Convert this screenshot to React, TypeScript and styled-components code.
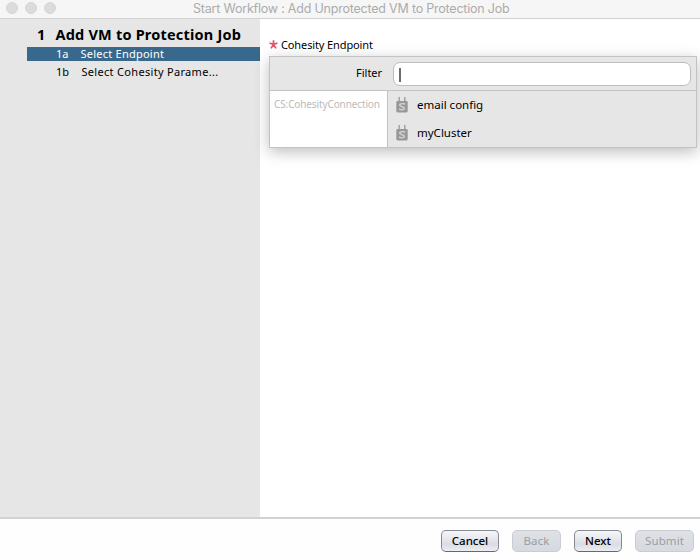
import React from 'react';
import styled, { createGlobalStyle } from 'styled-components';

const GlobalStyle = createGlobalStyle`
  *, *::before, *::after { box-sizing: border-box; }
  html, body { margin: 0; padding: 0; overflow: hidden; background: #fff; }
`;

const Window = styled.div`
  width: 700px;
  height: 560px;
  display: flex;
  flex-direction: column;
  overflow: hidden;
  background: #fff;
  color: #000;
  font-family: 'Noto Sans', 'Open Sans', sans-serif;
  font-size: 11px;
  white-space: nowrap;
`;

const TitleBar = styled.header`
  height: 19px;
  flex: none;
  display: grid;
  grid-template-columns: 193px 1fr;
  background: #f6f6f6;
  border-bottom: 1px solid #d3d3d3;
`;

const Lights = styled.div`
  display: flex;
  gap: 7px;
  padding: 2px 0 0 6px;
`;

const Light = styled.span`
  width: 12px;
  height: 12px;
  border-radius: 50%;
  background: #dcdcdc;
  border: 1px solid #d5d5d5;
`;

const Title = styled.h1`
  margin: 0;
  font: 400 12.5px/18px Inter, sans-serif;
  letter-spacing: -0.21px;
  color: #acacac;
`;

const Body = styled.div`
  height: 498px;
  flex: none;
  display: flex;
`;

const Sidebar = styled.nav`
  width: 260px;
  flex: none;
  padding: 5px 0 0 27px;
  background: #e6e6e6;
`;

const Group = styled.div`
  display: flex;
  height: 23px;
  padding-left: 10px;
  font-size: 14.5px;
  font-weight: 700;
  line-height: 21px;
`;

const GroupNumber = styled.span`
  width: 18.5px;
`;

const GroupLabel = styled.span`
  letter-spacing: 0.2px;
`;

const Step = styled.div<{ $active?: boolean }>`
  display: flex;
  height: ${p => (p.$active ? 14 : 22)}px;
  padding-left: 29px;
  line-height: ${p => (p.$active ? 14 : 22)}px;
  color: ${p => (p.$active ? '#fff' : '#000')};
  background: ${p => (p.$active ? '#38698c' : 'transparent')};
`;

const StepNumber = styled.span<{ $w: number }>`
  width: ${p => p.$w}px;
`;

const Label = styled.span<{ $track?: number }>`
  letter-spacing: ${p => p.$track ?? 0}px;
`;

const Main = styled.main`
  flex: 1;
  padding: 16px 3px 0 9px;
`;

const FieldLabel = styled.div`
  display: flex;
  align-items: center;
  height: 21px;
  gap: 3px;
  padding-bottom: 2px;
`;

const Popup = styled.section`
  height: 92px;
  border: 1px solid #c3c3c3;
  background: #e6e6e6;
  box-shadow: 0 4px 14px rgba(0, 0, 0, 0.26);
`;

const FilterRow = styled.div`
  display: flex;
  align-items: center;
  height: 34px;
  padding: 0 5px 0 0;
  border-bottom: 1px solid #c3c3c3;
`;

const FilterLabel = styled.label`
  width: 123px;
  flex: none;
  padding: 0 0 2px 86px;
`;

const FilterInput = styled.div`
  flex: 1;
  height: 24px;
  margin-top: 1px;
  display: flex;
  align-items: center;
  padding-left: 5px;
  border: 1px solid #bdbdbd;
  border-radius: 7px;
  background: #fff;
`;

const Caret = styled.span`
  width: 2px;
  height: 14px;
  margin-top: 2px;
  background: #6c6c6c;
`;

const Results = styled.div`
  display: flex;
  height: 56px;
`;

const Category = styled.div`
  width: 118px;
  flex: none;
  padding: 0 0 0 4px;
  border-right: 1px solid #c3c3c3;
  background: #fff;
  color: #bababa;
  font-size: 10px;
  line-height: 27px;
`;

const List = styled.div`
  flex: 1;
`;

const Item = styled.div`
  display: flex;
  align-items: center;
  height: 28px;
  padding-left: 8px;
  gap: 9px;
  font-size: 11.5px;
`;

const ItemLabel = styled.span`
  padding-bottom: 2px;
`;

const Footer = styled.footer`
  height: 43px;
  flex: none;
  display: flex;
  justify-content: flex-end;
  gap: 13px;
  padding: 11px 6px 0 0;
  border-top: 2px solid #d2d2d2;
  background: #fefefe;
`;

const Button = styled.button<{ $w: number }>`
  width: ${p => p.$w}px;
  height: 22px;
  padding: 0;
  border: 1px solid #858a94;
  border-bottom-color: #636872;
  border-radius: 5px;
  background: linear-gradient(#f6f7f9, #e2e4e9 50%, #d9dce3 65%, #eceef2);
  color: #000;
  font: inherit;
  font-size: 11.5px;
  font-weight: 500;
  line-height: 20px;

  &:disabled {
    border-color: #c8ccd4;
    background: linear-gradient(#dfe1e5, #d6d9e0);
    color: #9a9da1;
    font-weight: 400;
    letter-spacing: 0.1px;
  }
`;

const RequiredMark = () => (
  <svg width="9" height="9" viewBox="0 0 9 9" fill="none" stroke="#e2506a" strokeWidth="1.7">
    <path d="M4.5 4.5V0.3M4.5 4.5L0.5 3M4.5 4.5L8.5 3M4.5 4.5L2 8.4M4.5 4.5L7 8.4" />
  </svg>
);

const PlugIcon = () => (
  <svg width="12" height="16" viewBox="0 0 12 16" fill="none">
    <path d="M3.2 0v5M8.8 0v5" stroke="#a2a2a2" strokeWidth="1.5" />
    <rect x="0.3" y="4" width="11.4" height="11.4" rx="1.3" fill="#989898" />
    <path d="M9 7.3C7.8 6.3 3.6 6.3 3.6 8.1c0 1.6 4.8 1.6 4.8 3.2 0 1.8-4.2 1.6-5.4.6" stroke="#d0d0d0" strokeWidth="1.5" />
  </svg>
);

export default function App() {
  return (
    <Window>
      <GlobalStyle />
      <TitleBar>
        <Lights><Light /><Light /><Light /></Lights>
        <Title>Start Workflow : Add Unprotected VM to Protection Job</Title>
      </TitleBar>
      <Body>
        <Sidebar>
          <Group>
            <GroupNumber>1</GroupNumber>
            <GroupLabel>Add VM to Protection Job</GroupLabel>
          </Group>
          <Step $active>
            <StepNumber $w={24.5}>1a</StepNumber>
            <Label $track={0.24}>Select Endpoint</Label>
          </Step>
          <Step>
            <StepNumber $w={25.5}>1b</StepNumber>
            <Label $track={0.31}>Select Cohesity Parame...</Label>
          </Step>
        </Sidebar>
        <Main>
          <FieldLabel>
            <RequiredMark />
            <Label $track={-0.12}>Cohesity Endpoint</Label>
          </FieldLabel>
          <Popup>
            <FilterRow>
              <FilterLabel>Filter</FilterLabel>
              <FilterInput><Caret /></FilterInput>
            </FilterRow>
            <Results>
              <Category><Label $track={-0.12}>CS:CohesityConnection</Label></Category>
              <List>
                <Item><PlugIcon /><ItemLabel>email config</ItemLabel></Item>
                <Item><PlugIcon /><ItemLabel>myCluster</ItemLabel></Item>
              </List>
            </Results>
          </Popup>
        </Main>
      </Body>
      <Footer>
        <Button $w={58}>Cancel</Button>
        <Button $w={49} disabled>Back</Button>
        <Button $w={48}>Next</Button>
        <Button $w={59} disabled>Submit</Button>
      </Footer>
    </Window>
  );
}
